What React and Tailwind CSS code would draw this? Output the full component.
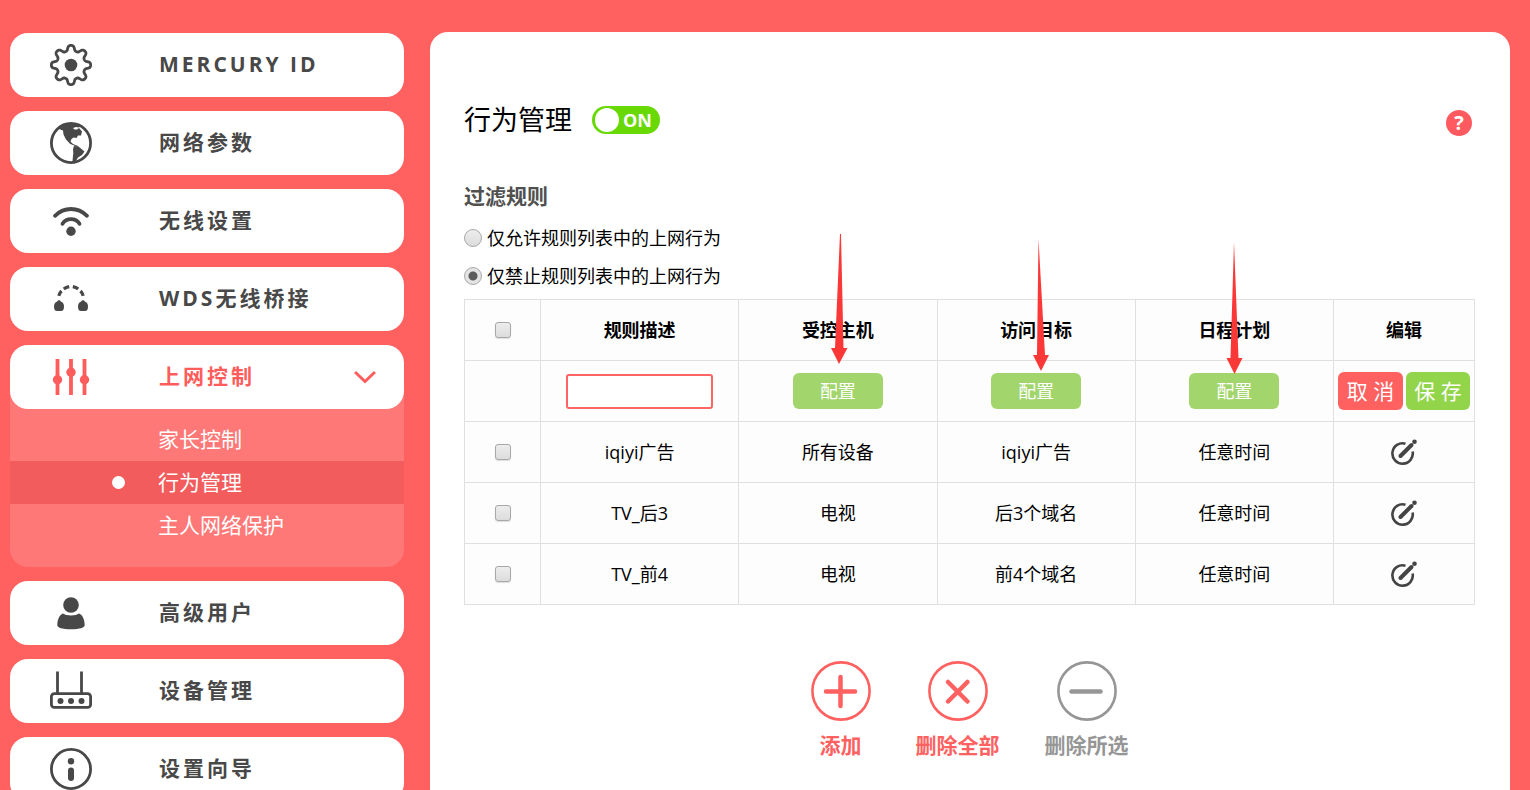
import { useState } from "react";

const gearPath = (() => {
  const points = [];
  for (let i = 0; i < 240; i++) {
    const a = (i / 240) * Math.PI * 2;
    const r = 17 + 2.6 * Math.tanh(1.6 * Math.cos(8 * a)) / Math.tanh(1.6);
    points.push(`${(21 + r * Math.cos(a)).toFixed(2)} ${(21 + r * Math.sin(a)).toFixed(2)}`);
  }
  return `M${points.join("L")}Z`;
})();

function MenuIcon({ children }) {
  return (
    <svg aria-hidden="true" viewBox="0 0 42 42" fill="none" stroke="currentColor" strokeWidth="2.8" className="size-[42px] shrink-0">
      {children}
    </svg>
  );
}

const icons = {
  gear: (
    <MenuIcon>
      <path d={gearPath} strokeLinejoin="round" />
      <circle cx="21" cy="21" r="6.3" fill="currentColor" stroke="none" />
    </MenuIcon>
  ),
  globe: (
    <MenuIcon>
      <circle cx="21" cy="21" r="19.6" />
      <path
        fill="currentColor"
        stroke="none"
        d="M8 6C14 1 26 0 31 4L29 5.500 26 5 23 6 24.500 7.500 27 7.500 29 6 32 9.500 31 13.500 28 13.500 26.500 16 23.500 15.500 21.500 17 20.500 19.500 23 22 28 24 27.500 25 20 21.800 16 17.500 13.500 12.500 13 8.500 9 7Z"
      />
      <path fill="currentColor" stroke="none" d="M24 24 28.500 24.500 34.500 29.500 32 33 28 35.500 24.500 41.500 22.300 41 23.300 31 23 27Z" />
    </MenuIcon>
  ),
  wifi: (
    <MenuIcon>
      <g strokeWidth="3.8" strokeLinecap="round">
        <path d="M5 15.800Q12 9 21 9T37 15.800" />
        <path d="M12.500 23.800Q15.500 19.200 21 19.200T29.500 23.800" />
      </g>
      <circle cx="21" cy="31.300" r="4.700" fill="currentColor" stroke="none" />
    </MenuIcon>
  ),
  bridge: (
    <MenuIcon>
      <path strokeWidth="3.200" d="M8.800 17.800Q9.500 15 11.500 13M13.800 11Q16 9.200 19.200 8.600M22.800 8.600Q26 9.200 28.200 11M30.500 13Q32.500 15 33.200 17.800" />
      <g fill="currentColor" stroke="none">
        <path d="M9 22.200Q10.500 22.200 10.800 23.500Q14 24.500 14 28.500Q14 33 11 33H7Q4 33 4 28.500Q4 24.500 7.200 23.500Q7.500 22.200 9 22.200Z" />
        <path d="M33 22.200Q34.500 22.200 34.800 23.500Q38 24.500 38 28.500Q38 33 35 33H31Q28 33 28 28.500Q28 24.500 31.200 23.500Q31.500 22.200 33 22.200Z" />
      </g>
    </MenuIcon>
  ),
  sliders: (
    <MenuIcon>
      <path strokeWidth="3.800" d="M7.500 3V39M21 3V39M34.500 3V39" />
      <g fill="currentColor" stroke="none">
        <circle cx="7.500" cy="23.700" r="4.700" />
        <circle cx="21" cy="16.300" r="4.700" />
        <circle cx="34.500" cy="23.700" r="4.700" />
      </g>
    </MenuIcon>
  ),
  user: (
    <MenuIcon>
      <g fill="currentColor" stroke="none">
        <circle cx="21" cy="13" r="7.800" />
        <path d="M13 21.500C9 23 7.300 28.500 7.300 33Q7.300 37.200 21 37.200T34.700 33C34.700 28.500 33 23 29 21.500C26 24 16 24 13 21.500Z" />
      </g>
    </MenuIcon>
  ),
  router: (
    <MenuIcon>
      <path d="M7.500 1.500V23M31.500 1.500V23" />
      <rect x="1.400" y="23.600" width="39.200" height="13.800" rx="3" />
      <g fill="currentColor" stroke="none">
        <circle cx="10.500" cy="31" r="3" />
        <circle cx="21" cy="31" r="3" />
        <circle cx="31.500" cy="31" r="3" />
      </g>
    </MenuIcon>
  ),
  info: (
    <MenuIcon>
      <circle cx="21" cy="21" r="19.600" />
      <circle cx="21" cy="13.300" r="3.200" fill="currentColor" stroke="none" />
      <path strokeWidth="6" strokeLinecap="round" d="M21 22.500V30" />
    </MenuIcon>
  ),
};

const menu = [
  { icon: "gear", label: "MERCURY ID" },
  { icon: "globe", label: "网络参数" },
  { icon: "wifi", label: "无线设置" },
  { icon: "bridge", label: "WDS无线桥接" },
  { icon: "sliders", label: "上网控制", children: ["家长控制", "行为管理", "主人网络保护"] },
  { icon: "user", label: "高级用户" },
  { icon: "router", label: "设备管理" },
  { icon: "info", label: "设置向导" },
];

function MenuItem({ item }) {
  const open = Boolean(item.children);
  return (
    <li>
      <a
        href="#"
        className={`relative z-10 flex h-16 items-center rounded-[18px] bg-white pr-7 pl-10 text-[21px] font-bold ${open ? "text-[#ff5c5c]" : "text-[#484848]"}`}
      >
        {icons[item.icon]}
        <span className="ml-[67px] flex-1 tracking-[3px] whitespace-nowrap">{item.label}</span>
        {open && (
          <svg aria-hidden="true" viewBox="0 0 22 14" fill="none" stroke="currentColor" strokeWidth="3" className="h-[14px] w-[22px]">
            <path d="M1 2 11 11.500 21 2" />
          </svg>
        )}
      </a>
      {open && (
        <ul className="-mt-5 rounded-b-[18px] bg-[#ff7878] pt-[29px] pb-5 text-[21px] text-white">
          {item.children.map((label) => {
            const active = label === "行为管理";
            return (
              <li key={label}>
                <a href="#" className={`flex h-[43px] items-center pl-[102px] ${active ? "bg-[#f25c5c]" : ""}`}>
                  <span className={`mr-[33px] size-[13px] rounded-full ${active ? "bg-white" : ""}`} />
                  {label}
                </a>
              </li>
            );
          })}
        </ul>
      )}
    </li>
  );
}

function Radio({ label, checked, onChange }) {
  return (
    <label className="flex h-[38px] items-center gap-[5px] text-lg text-black">
      <input
        type="radio"
        name="filter-mode"
        checked={checked}
        onChange={onChange}
        className="size-[18px] appearance-none rounded-full border border-[#a8a8a8] bg-linear-to-b from-[#ededed] to-[#dcdcdc] checked:bg-[radial-gradient(circle,#5c5c5c_0_4px,#e4e4e4_5px)]"
      />
      {label}
    </label>
  );
}

function Tick({ label }) {
  return (
    <input
      type="checkbox"
      aria-label={label}
      className="mx-auto block size-4 appearance-none rounded-[3px] border border-[#a8a8a8] bg-linear-to-b from-[#ededed] to-[#dcdcdc] shadow-[0_1px_1px_#dddddd] checked:bg-[#5c5c5c]"
    />
  );
}

function Arrow({ shape }) {
  return (
    <svg aria-hidden="true" viewBox="0 0 40 142" fill="#fb3838" className="pointer-events-none absolute -top-[67px] left-1/2 z-10 -ml-[21px] h-[142px] w-10">
      <path d={shape} />
    </svg>
  );
}

const columns = [
  { title: "规则描述" },
  { title: "受控主机", arrow: "M23 1h1L26.500 115h4L22 131 14 115h4z" },
  { title: "访问目标", arrow: "M23.500 6 30 122h4L26 138 18 122h4z" },
  { title: "日程计划", arrow: "M21 9 25.500 125h4L21.500 141 13.500 125h4z" },
  { title: "编辑" },
];

const rules = [
  ["iqiyi广告", "所有设备", "iqiyi广告", "任意时间"],
  ["TV_后3", "电视", "后3个域名", "任意时间"],
  ["TV_前4", "电视", "前4个域名", "任意时间"],
];

const actions = [
  { label: "添加", mark: "M15 30.500H44M29.500 16V45", color: "text-[#ff6060]" },
  { label: "删除全部", mark: "M20 21 39.500 40.500M39.500 21 20 40.500", color: "text-[#ff6060]" },
  { label: "删除所选", mark: "M14.500 30.500H43.500", color: "text-[#969696]" },
];

const cell = "border border-[#e0e0e0] p-0";

export default function App() {
  const [mode, setMode] = useState("deny");
  const [enabled, setEnabled] = useState(true);

  return (
    <div className="flex min-h-screen gap-[26px] bg-[#ff6060] pr-5 pl-2.5 font-['Open_Sans','Noto_Sans_CJK_SC',sans-serif]">
      <nav aria-label="主菜单" className="w-[394px] shrink-0 pt-[33px]">
        <ul className="flex flex-col gap-[14px]">
          {menu.map((item) => (
            <MenuItem key={item.label} item={item} />
          ))}
        </ul>
      </nav>

      <main className="mt-8 min-w-0 flex-1 rounded-t-[18px] bg-white pt-[72px] pr-[35px] pb-20 pl-[34px]">
        <header className="flex h-8 items-center">
          <h1 className="text-[27px] leading-8 text-black">行为管理</h1>
          <button
            type="button"
            role="switch"
            aria-checked={enabled}
            aria-label="行为管理开关"
            onClick={() => setEnabled(!enabled)}
            className="ml-5 flex h-7 w-[68px] items-center gap-1 rounded-full bg-[#69d906] pl-[3px] text-lg font-bold text-white"
          >
            <span className="size-6 rounded-full bg-white" />
            {enabled ? "ON" : "OFF"}
          </button>
          <button
            type="button"
            aria-label="帮助"
            className="mr-[3px] ml-auto size-[26px] self-end rounded-full bg-[#ff5a60] text-center text-xl leading-[26px] font-bold text-white"
          >
            ?
          </button>
        </header>

        <fieldset className="mt-[45px]">
          <legend className="mb-2 text-[21px] leading-[30px] font-bold text-[#505050]">过滤规则</legend>
          <Radio label="仅允许规则列表中的上网行为" checked={mode === "allow"} onChange={() => setMode("allow")} />
          <Radio label="仅禁止规则列表中的上网行为" checked={mode === "deny"} onChange={() => setMode("deny")} />
        </fieldset>

        <table className="mt-1 w-full table-fixed border-collapse bg-[#fdfdfd] text-center text-lg text-black">
          <colgroup>
            <col className="w-[76px]" />
            <col />
            <col />
            <col />
            <col />
            <col className="w-[141px]" />
          </colgroup>
          <thead>
            <tr className="h-[61px]">
              <th scope="col" className={cell}>
                <Tick label="全选" />
              </th>
              {columns.map((column) => (
                <th key={column.title} scope="col" className={`${cell} relative font-bold`}>
                  {column.title}
                  {column.arrow && <Arrow shape={column.arrow} />}
                </th>
              ))}
            </tr>
          </thead>
          <tbody>
            <tr className="h-[61px]">
              <td className={cell} />
              <td className={cell}>
                <input
                  type="text"
                  aria-label="规则描述"
                  className="mx-auto block h-[35px] w-[147px] rounded-[3px] border-2 border-[#ff6464] bg-white px-2"
                />
              </td>
              {["受控主机", "访问目标", "日程计划"].map((target) => (
                <td key={target} className={cell}>
                  <button type="button" aria-label={`配置${target}`} className="h-9 w-[90px] rounded-md bg-[#a2d56c] text-white">
                    配置
                  </button>
                </td>
              ))}
              <td className={cell}>
                <div className="flex justify-center gap-[3px] text-[21px] text-white">
                  <button type="button" className="h-[38px] w-[65px] rounded-md bg-[#ff6060]">
                    取 消
                  </button>
                  <button type="button" className="h-[38px] w-16 rounded-md bg-[#92d54b]">
                    保 存
                  </button>
                </div>
              </td>
            </tr>
            {rules.map((rule) => (
              <tr key={rule[0]} className="h-[61px]">
                <td className={cell}>
                  <Tick label={`选择 ${rule[0]}`} />
                </td>
                {rule.map((value, i) => (
                  <td key={i} className={cell}>
                    {value}
                  </td>
                ))}
                <td className={cell}>
                  <button type="button" aria-label={`编辑 ${rule[0]}`} className="mx-auto block text-[#444444]">
                    <svg aria-hidden="true" viewBox="0 0 26 26" fill="none" stroke="currentColor" className="size-[26px]">
                      <path strokeWidth="2.600" d="M14.500 4.700A10.200 10.200 0 1 0 21.600 12.500" />
                      <path strokeWidth="4" strokeLinecap="round" d="M9.500 17 20.500 6" />
                      <circle cx="23.500" cy="2.800" r="2.300" fill="currentColor" stroke="none" />
                    </svg>
                  </button>
                </td>
              </tr>
            ))}
          </tbody>
        </table>

        <div className="mt-14 flex justify-center gap-[45px]">
          {actions.map((action) => (
            <button key={action.label} type="button" className={`flex flex-col items-center gap-[9px] text-[21px] leading-[30px] font-bold ${action.color}`}>
              <svg aria-hidden="true" viewBox="0 0 60 60" fill="none" stroke="currentColor" className="size-[60px]">
                <circle cx="30" cy="30" r="28.600" strokeWidth="2.600" />
                <path d={action.mark} strokeWidth="4.500" strokeLinecap="round" />
              </svg>
              {action.label}
            </button>
          ))}
        </div>
      </main>
    </div>
  );
}
